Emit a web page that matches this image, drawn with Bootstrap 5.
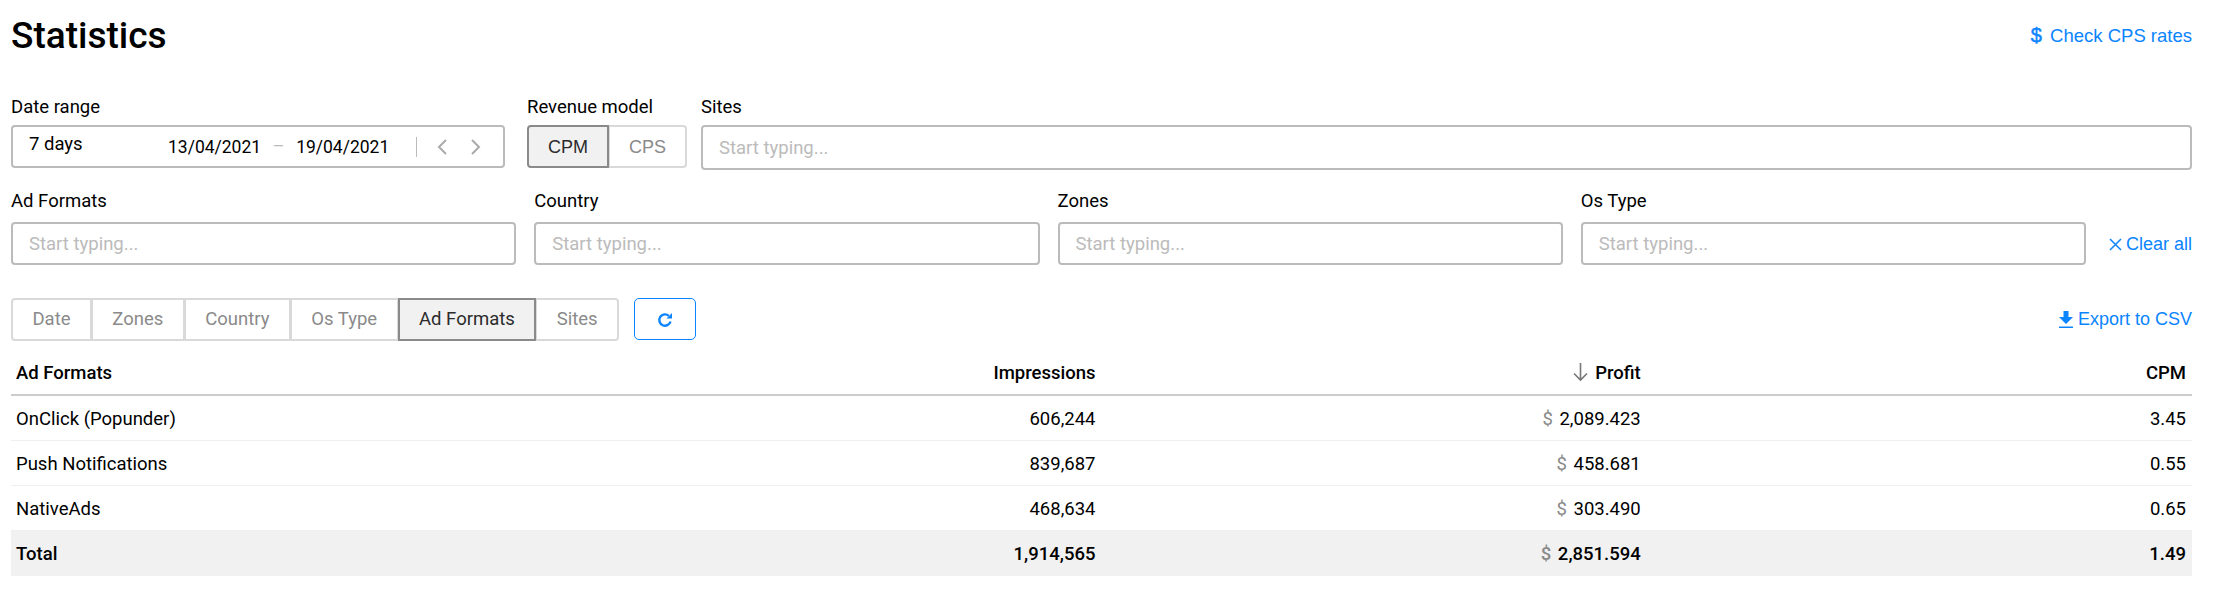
<!DOCTYPE html>
<html lang="en">
<head>
  <meta charset="UTF-8" />
  <title>Statistics</title>
  <link href="https://cdn.jsdelivr.net/npm/bootstrap@5.3.2/dist/css/bootstrap.min.css" rel="stylesheet"/>
  <style>
    body {
      font-family: Roboto, "Liberation Sans", sans-serif;
      font-size: 18.5px;
      color: #000;
      background: #fff;
    }

    .page-wrap {
      padding: 0 21px 0 11px;
    }

    .page-head {
      height: 95px;
      padding-top: 13px;
    }

    .page-title {
      font-size: 37px;
      line-height: 46px;
      font-weight: 500;
      margin: 0;
    }

    .blue-link {
      color: #0a84ff;
      text-decoration: none;
      font-family: "Liberation Sans", sans-serif;
      font-size: 18px;
      line-height: 24px;
      white-space: nowrap;
    }

    .rates-link {
      margin-top: 10px;
      font-size: 18.5px;
    }

    .rates-link b {
      font-size: 20px;
      font-weight: 400;
      -webkit-text-stroke: 0.5px #0a84ff;
      margin-right: 3px;
    }

    .field-label {
      display: block;
      font-size: 18.5px;
      line-height: 24px;
      margin: 0 0 6px;
    }

    .row-two {
      margin-top: 19px;
      gap: 18px;
    }

    .row-two .field-label {
      margin-bottom: 9px;
    }

    .date-field {
      width: 494px;
    }

    .model-field {
      width: 160px;
      margin-left: 22px;
    }

    .sites-field {
      margin-left: 14px;
    }

    .date-box {
      height: 43px;
      border: 2px solid #bbb;
      border-radius: 4px;
      padding: 0 0 0 16px;
    }

    .date-box > * {
      flex-shrink: 0;
    }

    .date-preset {
      width: 139px;
      margin-top: -3px;
    }

    .date-value {
      font-size: 17.5px;
      margin-top: 1px;
    }

    .date-dash {
      color: #bbb;
      width: 35px;
      text-align: center;
    }

    .date-sep {
      width: 1px;
      height: 20px;
      background: #bbb;
      margin-left: 27px;
      margin-right: 20px;
    }

    .date-arrow {
      width: 11px;
      height: 18px;
      margin-right: 22px;
    }

    .date-arrow:last-child {
      margin-right: 0;
    }

    .typing-input.form-control {
      height: 43px;
      border: 2px solid #bbb;
      border-radius: 4px;
      padding: 0 16px;
      font-size: 18.5px;
      box-shadow: none;
    }

    .sites-field .typing-input.form-control {
      height: 45px;
    }

    .typing-input::placeholder {
      color: #bbb;
    }

    .seg-group .btn {
      font-size: 18.5px;
      line-height: 24px;
      color: #8a8a8a;
      background: #fff;
      border: 2px solid #d9d9d9;
      border-radius: 4px;
      padding: 0;
      height: 43px;
    }

    .seg-group .btn.seg-on {
      color: #2b2b2b;
      background: #f1f1f1;
      border-color: #8a8a8a;
      z-index: 1;
    }

    .model-seg .btn {
      font-family: "Liberation Sans", sans-serif;
      font-size: 18px;
    }

    .clear-wrap {
      width: 85px;
      margin-left: 3px;
      height: 43px;
    }

    .clear-icon {
      width: 13px;
      height: 13px;
      margin-right: 4px;
    }

    .tabs-row {
      margin-top: 33px;
      height: 42px;
    }

    .report-seg {
      width: 608px;
    }

    .refresh-btn.btn {
      width: 62px;
      height: 42px;
      margin-left: 15px;
      border: 1.5px solid #0a84ff;
      border-radius: 5px;
      padding: 0;
      background: #fff;
    }

    .stats-table {
      table-layout: fixed;
      margin: 12px 0 0;
      font-size: 18.5px;
    }

    .stats-table th,
    .stats-table td {
      padding: 11px 6px 9px;
      line-height: 24px;
      border-bottom: 1px solid #efefef;
      color: #000;
    }

    .stats-table th:first-child,
    .stats-table td:first-child {
      padding-left: 5px;
    }

    .stats-table thead th {
      font-weight: 500;
      border-bottom: 2px solid #ccc;
      padding-top: 9px;
      padding-bottom: 9px;
    }

    .stats-table tfoot td {
      background: #f1f1f1;
      font-weight: 500;
      border-bottom: 0;
      padding-bottom: 10px;
    }

    .money-sign {
      color: #8a8a8a;
      margin-right: 2px;
    }

    .sort-arrow {
      width: 17px;
      height: 20px;
      margin-right: 6px;
      vertical-align: -3px;
    }
  </style>
</head>
<body>
  <div class="page-wrap">
    <div class="page-head d-flex justify-content-between align-items-start">
      <h1 class="page-title">Statistics</h1>
      <a href="#" class="blue-link rates-link"><b>$</b> Check CPS rates</a>
    </div>

    <div class="d-flex align-items-start">
      <div class="date-field">
        <label class="field-label">Date range</label>
        <div class="date-box d-flex align-items-center">
          <span class="date-preset">7 days</span>
          <span class="date-value">13/04/2021</span>
          <span class="date-dash">–</span>
          <span class="date-value">19/04/2021</span>
          <span class="date-sep"></span>
          <svg class="date-arrow" viewBox="0 0 11 18"><path d="M9 2 2 9l7 7" fill="none" stroke="#aaa" stroke-width="2"/></svg>
          <svg class="date-arrow" viewBox="0 0 11 18"><path d="M2 2l7 7-7 7" fill="none" stroke="#aaa" stroke-width="2"/></svg>
        </div>
      </div>
      <div class="model-field">
        <label class="field-label">Revenue model</label>
        <div class="btn-group seg-group model-seg w-100">
          <button type="button" class="btn seg-on">CPM</button>
          <button type="button" class="btn">CPS</button>
        </div>
      </div>
      <div class="sites-field flex-grow-1">
        <label class="field-label">Sites</label>
        <input type="text" class="form-control typing-input" placeholder="Start typing..." />
      </div>
    </div>

    <div class="row-two d-flex align-items-end">
      <div class="flex-fill w-25">
        <label class="field-label">Ad Formats</label>
        <input type="text" class="form-control typing-input" placeholder="Start typing..." />
      </div>
      <div class="flex-fill w-25">
        <label class="field-label">Country</label>
        <input type="text" class="form-control typing-input" placeholder="Start typing..." />
      </div>
      <div class="flex-fill w-25">
        <label class="field-label">Zones</label>
        <input type="text" class="form-control typing-input" placeholder="Start typing..." />
      </div>
      <div class="flex-fill w-25">
        <label class="field-label">Os Type</label>
        <input type="text" class="form-control typing-input" placeholder="Start typing..." />
      </div>
      <div class="clear-wrap flex-shrink-0 d-flex align-items-center justify-content-end">
        <a href="#" class="blue-link">
          <svg class="clear-icon" viewBox="0 0 13 13"><path d="M1 1l11 11M12 1 1 12" fill="none" stroke="#0a84ff" stroke-width="1.500"/></svg>Clear all
        </a>
      </div>
    </div>

    <div class="tabs-row d-flex align-items-center">
      <div class="btn-group seg-group report-seg">
        <button type="button" class="btn">Date</button>
        <button type="button" class="btn">Zones</button>
        <button type="button" class="btn">Country</button>
        <button type="button" class="btn">Os Type</button>
        <button type="button" class="btn seg-on">Ad Formats</button>
        <button type="button" class="btn">Sites</button>
      </div>
      <button type="button" class="btn refresh-btn">
        <svg width="18" height="18" viewBox="0 0 18 18"><path d="M14.500 10.500A5.700 5.700 0 1 1 12.800 4.800" fill="none" stroke="#0a84ff" stroke-width="2.400"/><path d="M10.500 7.500h5.500V2z" fill="#0a84ff"/></svg>
      </button>
      <a href="#" class="blue-link ms-auto">
        <svg width="14" height="18" viewBox="0 0 14 18"><path d="M4.500 0h5v6H14L7 13 0 6h4.500z" fill="#0a84ff"/><path d="M0 15.500h14V17H0z" fill="#0a84ff"/></svg>
        Export to CSV
      </a>
    </div>

    <table class="table stats-table">
      <thead>
        <tr>
          <th>Ad Formats</th>
          <th class="text-end">Impressions</th>
          <th class="text-end">
            <svg class="sort-arrow" viewBox="0 0 17 20"><path d="M8.500 1v17M2 11.500l6.500 6.500 6.500-6.500" fill="none" stroke="#777" stroke-width="1.600"/></svg>Profit
          </th>
          <th class="text-end">CPM</th>
        </tr>
      </thead>
      <tbody id="stats-body"></tbody>
      <tfoot>
        <tr>
          <td>Total</td>
          <td class="text-end">1,914,565</td>
          <td class="text-end"><span class="money-sign">$</span> 2,851.594</td>
          <td class="text-end">1.49</td>
        </tr>
      </tfoot>
    </table>
  </div>

  <script>
    const rows = [
      { name: "OnClick (Popunder)", shows: "606,244", profit: "2,089.423", cpm: "3.45" },
      { name: "Push Notifications", shows: "839,687", profit: "458.681", cpm: "0.55" },
      { name: "NativeAds", shows: "468,634", profit: "303.490", cpm: "0.65" }
    ];

    document.getElementById("stats-body").innerHTML = rows.map(row => `
      <tr>
        <td>${row.name}</td>
        <td class="text-end">${row.shows}</td>
        <td class="text-end"><span class="money-sign">$</span> ${row.profit}</td>
        <td class="text-end">${row.cpm}</td>
      </tr>
    `).join("");
  </script>
  <script src="https://cdn.jsdelivr.net/npm/bootstrap@5.3.2/dist/js/bootstrap.bundle.min.js"></script>
</body>
</html>
